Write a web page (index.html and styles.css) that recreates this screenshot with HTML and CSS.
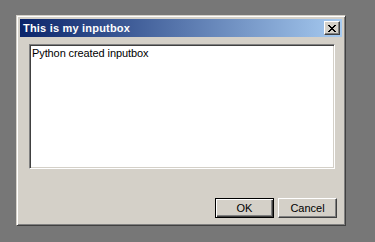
FILE: index.html
```html
<!DOCTYPE html>
<html lang="en">
<head>
  <meta charset="UTF-8">
  <title>This is my inputbox</title>
  <link rel="stylesheet" href="styles.css">
</head>
<body>

  <div class="window">
    <div class="titlebar">
      <span class="title">This is my inputbox</span>
      <button class="close" aria-label="Close">
        <svg width="8" height="7" viewBox="0 0 8 7">
          <path d="M0 0h2v1h1v1h2v-1h1v-1h2v1h-1v1h-1v1h-1v1h1v1h1v1h1v1h-2v-1h-1v-1h-2v1h-1v1h-2v-1h1v-1h1v-1h1v-1h-1v-1h-1v-1h-1z" fill="#000"/>
        </svg>
      </button>
    </div>
    <div class="content">
      <div class="textarea">Python created inputbox</div>
      <div class="buttons">
        <button class="btn default">OK</button>
        <button class="btn">Cancel</button>
      </div>
    </div>
  </div>

</body>
</html>
```

FILE: styles.css
```css
body {
  margin: 0;
  background: #777777;
  font-family: "Liberation Sans", Arial, sans-serif;
  font-size: 11px;
}
.window {
  margin: 15px 0 0 16px;
  width: 330px;
  height: 211px;
  box-sizing: border-box;
  background: #d4d0c8;
  border: 1px solid;
  border-color: #d4d0c8 #404040 #404040 #d4d0c8;
  box-shadow: inset 1px 1px 0 #ffffff, inset -1px -1px 0 #808080;
  padding: 3px;
  display: flex;
  flex-direction: column;
}
.titlebar {
  height: 18px;
  background: linear-gradient(to right, #0a246a, #a6caf0);
  display: flex;
  align-items: center;
  justify-content: space-between;
  padding: 0 2px 0 3px;
}
.title {
  color: #ffffff;
  font-weight: bold;
  font-size: 11px;
  letter-spacing: 0.2px;
}
.close {
  width: 16px;
  height: 14px;
  padding: 0;
  background: #d4d0c8;
  border: 1px solid;
  border-color: #ffffff #404040 #404040 #ffffff;
  box-shadow: inset -1px -1px 0 #808080;
  display: flex;
  align-items: center;
  justify-content: center;
}
.content {
  flex: 1;
  display: flex;
  flex-direction: column;
  padding: 7px 7px 4px 9px;
}
.textarea {
  height: 125px;
  box-sizing: border-box;
  background: #ffffff;
  border: 1px solid;
  border-color: #808080 #ffffff #ffffff #808080;
  box-shadow: inset 1px 1px 0 #404040, inset -1px -1px 0 #d4d0c8;
  padding: 2px 2px;
  color: #000;
  letter-spacing: -0.1px;
}
.buttons {
  margin-top: auto;
  margin-right: -2px;
  display: flex;
  justify-content: flex-end;
  gap: 4px;
}
.btn {
  width: 59px;
  height: 20px;
  padding: 0;
  font-family: "Liberation Sans", Arial, sans-serif;
  font-size: 11px;
  color: #000;
  background: #d4d0c8;
  border: 1px solid;
  border-color: #ffffff #404040 #404040 #ffffff;
  box-shadow: inset -1px -1px 0 #808080;
}
.btn.default {
  border-color: #000;
  box-shadow: inset 1px 1px 0 #ffffff, inset -1px -1px 0 #404040, inset -2px -2px 0 #808080;
}
```
